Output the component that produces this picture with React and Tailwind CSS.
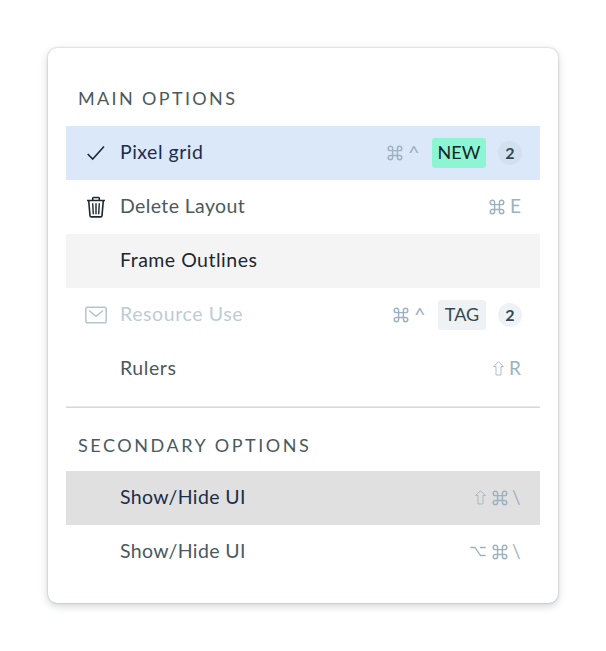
import React from "react";

function Command() {
  return (
    <svg width="16" height="16" viewBox="0 0 16 16" fill="none" stroke="currentColor" strokeWidth="1.45" className="mb-px shrink-0">
      <path d="M5.6 5.6V3.4A2.2 2.2 0 1 0 3.4 5.6H12.6A2.2 2.2 0 1 0 10.4 3.4V12.6A2.2 2.2 0 1 0 12.6 10.4H3.4A2.2 2.2 0 1 0 5.6 12.6Z" />
    </svg>
  );
}

function Shift() {
  return (
    <svg width="11" height="15" viewBox="0 0 11 15" fill="none" stroke="currentColor" strokeWidth="0.85" className="mb-px shrink-0">
      <path d="M5.5 .7 10.3 5.5H8V14H3V5.5H.7Z" />
    </svg>
  );
}

function Option() {
  return (
    <svg width="16" height="11" viewBox="0 0 16 11" fill="none" stroke="currentColor" strokeWidth="1.3" className="mb-[2px] shrink-0">
      <path d="M.3 1.5H5L10.5 9.5H15.7M9.8 1.5H15.7" />
    </svg>
  );
}

function Check() {
  return (
    <svg width="24" height="24" viewBox="0 0 24 24" fill="none" stroke="#1d282f" strokeWidth="1.6">
      <path d="M3.7 13 8.7 18 20 5.5" />
    </svg>
  );
}

function Trash() {
  return (
    <svg width="24" height="24" viewBox="0 0 24 24" fill="none" stroke="#1d282f" strokeWidth="1.6">
      <path d="M3 5.5H21M8.7 5V3.3Q8.7 2.5 9.5 2.5H14.5Q15.3 2.5 15.3 3.3V5M4.7 5.8 6 20.6Q6.1 21.9 7.4 21.9H16.6Q17.9 21.9 18 20.6L19.3 5.8" />
      <path strokeWidth="1.4" d="M8.7 8.2 9.3 19.3M12 8.2V19.3M15.3 8.2 14.7 19.3" />
    </svg>
  );
}

function Mail() {
  return (
    <svg width="24" height="24" viewBox="0 0 24 24" fill="none" stroke="#b4c6d3" strokeWidth="1.5" strokeLinejoin="round">
      <rect x="1.8" y="4.3" width="20.4" height="15.5" rx="1.8" />
      <path d="M5 7.5 12 13.3 19 7.5" />
    </svg>
  );
}

function Row({ className, icon, label, labelClass, children }) {
  return (
    <div className={`flex h-[54px] items-center pr-[18px] pl-[18px] ${className}`}>
      <span className="mr-3 flex h-6 w-6 shrink-0 items-center justify-center">{icon}</span>
      <span className={`pb-[3px] text-[19.5px] leading-[27px] whitespace-nowrap ${labelClass}`}>{label}</span>
      <div className="ml-auto flex h-6 items-center text-[19px] leading-6 text-[#9db2c0]">{children}</div>
    </div>
  );
}

function Key({ className, children }) {
  return (
    <span className={`pb-[2px] ${className}`}>{children}</span>
  );
}

function Tag({ className, children }) {
  return (
    <span className={`ml-[13px] flex h-[30px] items-center justify-center rounded-[3px] pb-[2px] text-[18px] ${className}`}>
      {children}
    </span>
  );
}

function Count({ className }) {
  return (
    <span className={`ml-3 flex h-6 w-6 items-center justify-center rounded-full pb-px text-[16px] font-bold text-[#37474f] ${className}`}>
      2
    </span>
  );
}

export default function App() {
  return (
    <div className="h-[651px] w-[606px] bg-white p-12 font-['Lato','Noto_Sans',sans-serif]">
      <div className="h-[555px] w-[510px] rounded-[9px] bg-white px-[18px] pt-[24px] shadow-[0_0_2px_rgba(38,60,70,0.35),0_3px_9px_rgba(38,60,70,0.22)]">
        <h2 className="flex h-[54px] items-center pb-[2px] pl-3 text-[18px] tracking-[2.35px] text-[#4a5960]">MAIN OPTIONS</h2>
        <Row className="bg-[#dbe8fa]" icon={<Check />} label="Pixel grid" labelClass="text-[#1b2d4a] tracking-[0.5px]">
          <Command />
          <Key className="ml-[5px] w-[11px] text-[20px]">^</Key>
          <Tag className="w-[54px] bg-[#8df5d2] text-[#14272b]">NEW</Tag>
          <Count className="bg-[#d2e0ef]" />
        </Row>
        <Row className="bg-white" icon={<Trash />} label="Delete Layout" labelClass="text-[#4a5960] tracking-[0.38px]">
          <Command />
          <Key className="ml-[5px] w-[12px]">E</Key>
        </Row>
        <Row className="bg-[#f4f4f4]" label="Frame Outlines" labelClass="text-[#1d282f] tracking-[0.5px]" />
        <Row className="bg-white" icon={<Mail />} label="Resource Use" labelClass="text-[#bdccd7] tracking-[0.6px]">
          <Command />
          <Key className="ml-[5px] w-[11px] text-[20px]">^</Key>
          <Tag className="w-[48px] bg-[#eff2f4] text-[#37474f]">TAG</Tag>
          <Count className="bg-[#eff2f4]" />
        </Row>
        <Row className="bg-white" label="Rulers" labelClass="text-[#4a5960] tracking-[0.55px]">
          <Shift />
          <Key className="ml-[5px] w-[13px]">R</Key>
        </Row>
        <div className="mt-[10px] h-[2px] border-t border-[#e4e9ec] bg-[#cfdbe2]" />
        <h2 className="mt-[9px] flex h-[54px] items-center pt-[2px] pl-3 text-[18px] tracking-[2.55px] text-[#4a5960]">SECONDARY OPTIONS</h2>
        <Row className="bg-[#e0e0e0]" label="Show/Hide UI" labelClass="text-[#1b2d4a] tracking-[0.38px]">
          <Shift />
          <span className="ml-[6px] flex"><Command /></span>
          <Key className="ml-[4px] w-[10px]">\</Key>
        </Row>
        <Row className="bg-white" label="Show/Hide UI" labelClass="text-[#4a5960] tracking-[0.38px]">
          <Option />
          <span className="ml-[6px] flex"><Command /></span>
          <Key className="ml-[4px] w-[10px]">\</Key>
        </Row>
      </div>
    </div>
  );
}
